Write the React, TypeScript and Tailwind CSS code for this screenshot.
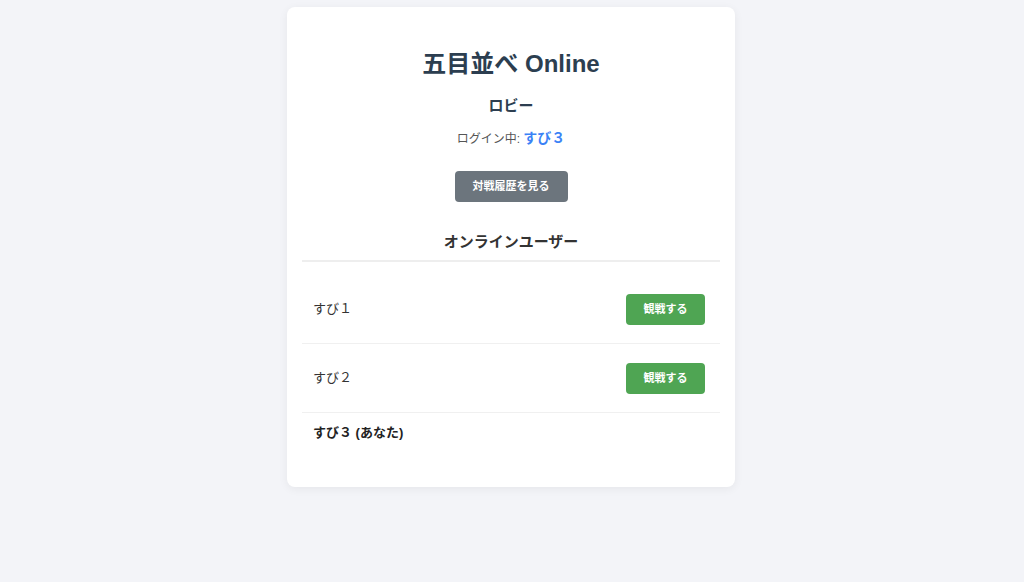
const users = [
  { name: "すび１", me: false },
  { name: "すび２", me: false },
  { name: "すび３", me: true },
];

export default function App() {
  return (
    <div
      className="min-h-[582px] w-full bg-[#f3f4f8] pt-[7px]"
      style={{ fontFamily: '"Liberation Sans", "Noto Sans CJK JP", sans-serif' }}
    >
      <div className="mx-auto w-[448px] -translate-x-px rounded-lg bg-white px-[15px] pt-[41px] pb-[34px] shadow-[0_2px_10px_rgba(0,0,0,0.06)]">
        <h1 className="text-center text-[24px] leading-[32px] font-bold text-[#2c3e50]">
          五目並べ Online
        </h1>
        <h2 className="mt-[15px] text-center text-[15px] leading-[22px] font-bold text-[#2c3e50]">
          ロビー
        </h2>
        <p className="mt-[11px] text-center text-[12px] leading-[20px] text-[#555]">
          ログイン中:{" "}
          <span className="text-[14px] font-bold text-[#3b82f6]">すび３</span>
        </p>
        <div className="mt-[22px] flex justify-center">
          <button className="h-[31px] w-[113px] rounded-[4px] bg-[#6c757d] text-[11px] font-bold text-white">
            対戦履歴を見る
          </button>
        </div>
        <h3 className="mt-[29px] border-b-2 border-[#eeeeee] pb-[7px] text-center text-[15px] leading-[22px] font-bold text-[#333]">
          オンラインユーザー
        </h3>
        <ul className="mt-[13px]">
          {users.map((u, i) => (
            <li
              key={u.name}
              className={
                u.me
                  ? "py-[10px] pl-[11px] text-[13px] leading-[20px] font-bold text-[#222]"
                  : "flex h-[69px] items-center justify-between pl-[11px] pr-[15px] text-[13px] text-[#333]" +
                    (i < users.length - 1 ? " border-b border-[#f0f0f0]" : "")
              }
            >
              {u.me ? `${u.name} (あなた)` : u.name}
              {!u.me && (
                <button className="h-[31px] w-[79px] rounded-[4px] bg-[#4fa553] text-[11px] font-bold text-white">
                  観戦する
                </button>
              )}
            </li>
          ))}
        </ul>
      </div>
    </div>
  );
}
